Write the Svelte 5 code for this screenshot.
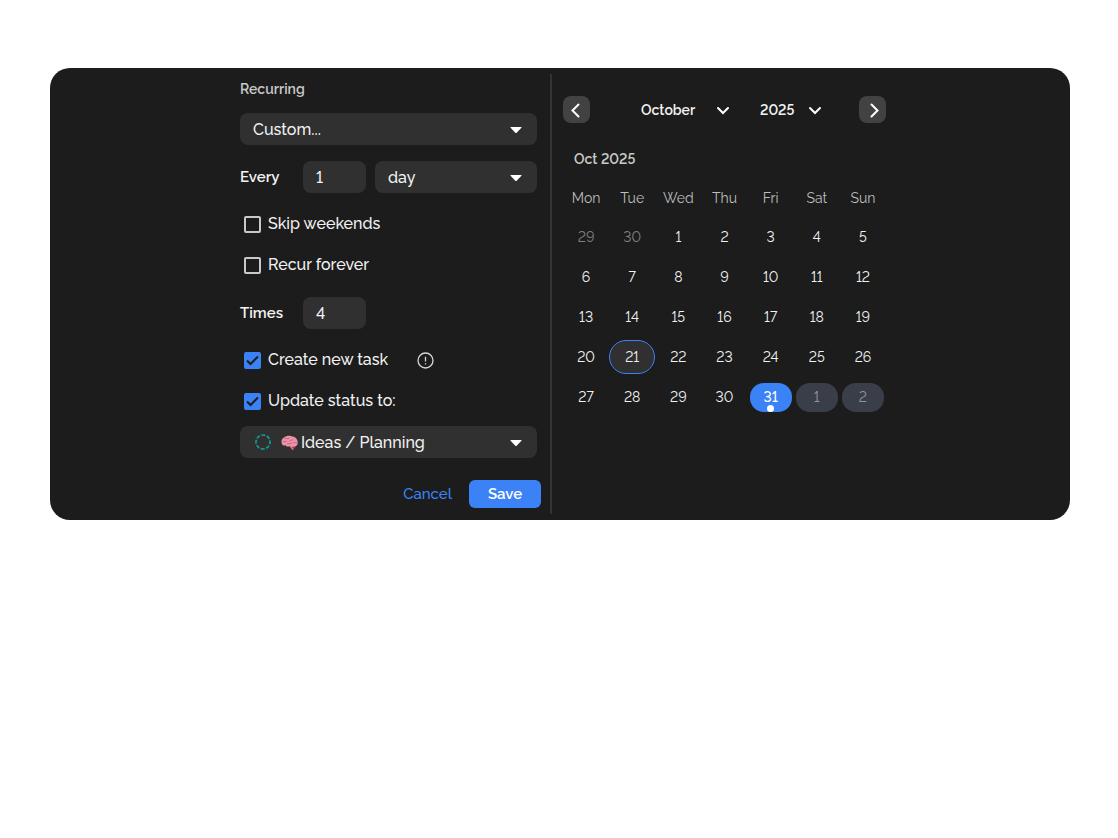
<script lang="ts">
    const months = [
        "January", "February", "March", "April", "May", "June",
        "July", "August", "September", "October", "November", "December",
    ];
    const years = [2024, 2025, 2026];
    const weekdays = ["Mon", "Tue", "Wed", "Thu", "Fri", "Sat", "Sun"];

    // Form data
    let recurring = $state("Custom...");
    let interval = $state(1);
    let unit = $state("day");
    let skipWeekends = $state(false);
    let recurForever = $state(false);
    let times = $state(4);
    let createTask = $state(true);
    let updateStatus = $state(true);
    let status = $state("Ideas / Planning");

    // Calendar data
    let month = $state("October");
    let year = $state(2025);

    // Five weeks starting on Monday, September 29
    const weeks = Array.from({ length: 5 }, (_, week) =>
        Array.from({ length: 7 }, (_, day) => {
            const offset = week * 7 + day - 1;
            if (offset < 1) return { day: offset + 30, kind: "outside" };
            if (offset > 31) return { day: offset - 31, kind: "upcoming" };
            if (offset === 31) return { day: offset, kind: "selected" };
            if (offset === 21) return { day: offset, kind: "today" };
            return { day: offset, kind: "" };
        })
    );
</script>

{#snippet caret()}
    <svg class="caret" width="12" height="6" viewBox="0 0 12 6" aria-hidden="true">
        <path d="M1 0H11Q12 0 11.400 .8L6.700 5.700Q6 6.300 5.300 5.700L.6 .8Q0 0 1 0Z" fill="#fff" />
    </svg>
{/snippet}

{#snippet chevron()}
    <svg class="chevron" width="14" height="9" viewBox="0 0 14 9" aria-hidden="true">
        <path d="M2 2L7 7L12 2" fill="none" stroke="#fff" stroke-width="2" stroke-linecap="round" />
    </svg>
{/snippet}

<main class="card">
    <div class="dialog">
        <form class="recurrence" onsubmit={(e) => e.preventDefault()}>
            <div class="fields">
                <label class="title" for="recurring">Recurring</label>
                <div class="select">
                    <select id="recurring" bind:value={recurring}>
                        <option>Daily</option>
                        <option>Weekly</option>
                        <option>Custom...</option>
                    </select>
                    {@render caret()}
                </div>

                <div class="row every">
                    <label class="name" for="interval">Every</label>
                    <input class="number" id="interval" type="number" min="1" bind:value={interval} />
                    <div class="select unit">
                        <select aria-label="Unit" bind:value={unit}>
                            <option>day</option>
                            <option>week</option>
                            <option>month</option>
                        </select>
                        {@render caret()}
                    </div>
                </div>

                <div class="checks">
                    <label class="check">
                        <input type="checkbox" bind:checked={skipWeekends} />
                        Skip weekends
                    </label>
                    <label class="check">
                        <input type="checkbox" bind:checked={recurForever} />
                        Recur forever
                    </label>
                </div>

                <div class="row">
                    <label class="name" for="times">Times</label>
                    <input class="number" id="times" type="number" min="1" bind:value={times} />
                </div>

                <div class="checks">
                    <div class="row with-info">
                        <label class="check">
                            <span class="box">
                                <input type="checkbox" bind:checked={createTask} />
                                <svg viewBox="0 0 17 17" aria-hidden="true"><path d="M3 8.500L6.500 12L14 4.500" /></svg>
                            </span>
                            Create new task
                        </label>
                        <svg class="info" width="17" height="17" viewBox="0 0 17 17" aria-hidden="true">
                            <circle cx="8.500" cy="8.500" r="7.500" fill="none" stroke="#d6d6d6" stroke-width="1.300" />
                            <path d="M8.500 4.800V9.400M8.500 11.300V12.500" stroke="#d6d6d6" stroke-width="1.300" />
                        </svg>
                    </div>
                    <label class="check">
                        <span class="box">
                            <input type="checkbox" bind:checked={updateStatus} />
                            <svg viewBox="0 0 17 17" aria-hidden="true"><path d="M3 8.500L6.500 12L14 4.500" /></svg>
                        </span>
                        Update status to:
                    </label>
                </div>

                <div class="select status">
                    <select aria-label="Status" bind:value={status}>
                        <option>Ideas / Planning</option>
                        <option>In progress</option>
                        <option>Done</option>
                    </select>
                    <span class="status-icons">
                        <svg width="16" height="16" viewBox="0 0 16 16" aria-hidden="true">
                            <circle cx="8" cy="8" r="7" fill="none" stroke="#129c96" stroke-width="1.700" pathLength="80" stroke-dasharray="7 3" stroke-dashoffset="3" />
                        </svg>
                        <svg width="17" height="15" viewBox="0 0 17 15" aria-hidden="true">
                            <path d="M9 10.500L14.500 10.500Q15.500 12 13 13.500Q11 14.500 10 13.500Z" fill="#a83a55" />
                            <path d="M1 9C-.3 6.500 .8 3.700 3 2.500C5 .6 9 .2 11.500 1.400C14.500 1.500 16.800 4.500 16.700 7.500C17 10 15 11.700 12.500 11.400C11 12.500 9.300 11.800 8.500 11C6.500 12.300 5 11 4.700 10.200C3 11 1.500 10.300 1 9Z" fill="#ea93a9" />
                            <path d="M2 6.800C3.500 5.500 4 7.500 5.500 6.500M4 3.500C5.500 2.500 6 4.500 8 3.200M8.500 6C10 4.500 11 6 12 4.500M6.500 9C8 7.500 9 9.500 11 8.200M12.500 7.500C14 6.500 14 8.500 15.500 8" fill="none" stroke="#c05a78" stroke-width=".9" stroke-linecap="round" />
                            <path d="M9 11.300C10 12 11 13.200 11.800 14.200" fill="none" stroke="#d8728b" stroke-width="1.400" stroke-linecap="round" />
                        </svg>
                    </span>
                    {@render caret()}
                </div>
            </div>

            <div class="actions">
                <button class="cancel" type="button">Cancel</button>
                <button class="save" type="submit">Save</button>
            </div>
        </form>

        <section class="calendar">
            <div class="nav">
                <button class="arrow" type="button" aria-label="Previous month">
                    <svg width="27" height="27" viewBox="0 0 27 27" aria-hidden="true">
                        <path d="M15.500 8.500L9.500 14.500L15.500 20.500" />
                    </svg>
                </button>
                <div class="pickers">
                    <div class="picker month">
                        <select aria-label="Month" bind:value={month}>
                            {#each months as name}
                                <option>{name}</option>
                            {/each}
                        </select>
                        {@render chevron()}
                    </div>
                    <div class="picker year">
                        <select aria-label="Year" bind:value={year}>
                            {#each years as value}
                                <option {value}>{value}</option>
                            {/each}
                        </select>
                        {@render chevron()}
                    </div>
                </div>
                <button class="arrow" type="button" aria-label="Next month">
                    <svg width="27" height="27" viewBox="0 0 27 27" aria-hidden="true">
                        <path d="M12.500 8.500L18.500 14.500L12.500 20.500" />
                    </svg>
                </button>
            </div>

            <h2>Oct 2025</h2>

            <table>
                <thead>
                    <tr>
                        {#each weekdays as weekday}
                            <th scope="col">{weekday}</th>
                        {/each}
                    </tr>
                </thead>
                <tbody>
                    {#each weeks as week}
                        <tr>
                            {#each week as date}
                                <td><button class="day {date.kind}" type="button">{date.day}</button></td>
                            {/each}
                        </tr>
                    {/each}
                </tbody>
            </table>
        </section>
    </div>
</main>

<style>
    :global(body) {
        margin: 0;
        background: #fff;
    }

    .card {
        margin: 68px 48px 68px 50px;
        padding: 6px 0;
        border-radius: 20px;
        background: #1c1c1c;
        color: #f2f2f2;
        font-family: Raleway, Lato, sans-serif;
        font-size: 16px;
        font-weight: 500;
        font-variant-numeric: lining-nums;
    }

    button,
    input,
    select {
        box-sizing: border-box;
        margin: 0;
        padding: 0;
        border: 0;
        color: inherit;
        font: inherit;
        font-variant-numeric: lining-nums;
    }

    button {
        background: none;
        cursor: pointer;
    }

    .dialog {
        display: grid;
        grid-template-columns: 324fr 340fr;
        max-width: 664px;
        margin: 0 auto;
    }

    .recurrence {
        padding: 5px 9px 6px 12px;
        border-right: 2px solid #333;
    }

    .fields {
        display: flex;
        flex-direction: column;
        margin-right: 4px;
    }

    .title {
        margin-bottom: 14px;
        color: #c9c9c9;
        font-size: 14px;
        font-weight: 600;
        line-height: 20px;
    }

    .select {
        position: relative;
    }

    .select select {
        display: block;
        width: 100%;
        height: 32px;
        padding: 0 32px 0 13px;
        border-radius: 8px;
        background: #303030;
        appearance: none;
    }

    .caret {
        position: absolute;
        top: 14px;
        right: 15px;
        pointer-events: none;
    }

    .row {
        display: flex;
        align-items: center;
    }

    .every {
        margin-top: 16px;
    }

    .name {
        width: 63px;
        font-size: 15px;
        font-weight: 600;
    }

    .number {
        width: 63px;
        height: 32px;
        padding: 0 13px;
        border-radius: 8px;
        background: #303030;
        appearance: textfield;
    }

    .unit {
        flex: 1;
        margin-left: 9px;
    }

    .checks {
        display: flex;
        flex-direction: column;
        gap: 17px;
        margin: 19px 0 20px;
    }

    .check {
        display: flex;
        align-items: center;
        gap: 7px;
        padding-left: 4px;
        line-height: 24px;
    }

    .check input {
        display: block;
        width: 17px;
        height: 17px;
        border: 2px solid #c9c9c9;
        border-radius: 2px;
        appearance: none;
    }

    .check input:checked {
        border-color: #3b82f6;
        background: #3b82f6;
    }

    .box {
        position: relative;
    }

    .box svg {
        position: absolute;
        inset: 0;
        fill: none;
        stroke: #1c1c1c;
        stroke-width: 2;
        pointer-events: none;
    }

    .with-info {
        gap: 29px;
    }

    .status {
        margin-top: -7px;
    }

    .status select {
        padding-left: 61px;
    }

    .status-icons {
        position: absolute;
        top: 8px;
        left: 15px;
        display: flex;
        align-items: center;
        gap: 10px;
        pointer-events: none;
    }

    .actions {
        display: flex;
        justify-content: flex-end;
        gap: 17px;
        margin-top: 22px;
        font-size: 15px;
    }

    .cancel {
        color: #3b82f6;
    }

    .save {
        width: 72px;
        height: 28px;
        border-radius: 6px;
        background: #3b82f6;
        color: #fff;
        font-weight: 600;
    }

    .calendar {
        padding: 22px 6px 0 11px;
        font-size: 14px;
    }

    .nav {
        display: flex;
        align-items: center;
        justify-content: space-between;
    }

    .arrow {
        width: 27px;
        height: 27px;
        border-radius: 8px;
        background: #424242;
    }

    .arrow svg {
        display: block;
        fill: none;
        stroke: #fff;
        stroke-width: 2;
        stroke-linecap: round;
    }

    .pickers {
        display: flex;
        gap: 30px;
        padding-left: 14px;
    }

    .picker {
        position: relative;
    }

    .picker select {
        display: block;
        width: 100%;
        height: 27px;
        background: transparent;
        font-weight: 600;
        appearance: none;
    }

    .select option,
    .picker option {
        background: #303030;
    }

    .month {
        width: 89px;
    }

    .year {
        width: 62px;
    }

    .chevron {
        position: absolute;
        top: 10px;
        right: 0;
        pointer-events: none;
    }

    h2 {
        margin: 26px 0 10px 11px;
        color: #c9c9c9;
        font-size: 14px;
        font-weight: 600;
        line-height: 20px;
    }

    table {
        width: 100%;
        border-collapse: collapse;
        table-layout: fixed;
        text-align: center;
    }

    th {
        height: 38px;
        padding: 0;
        color: #bdbdbd;
        font-weight: 400;
    }

    td {
        height: 40px;
        padding: 0;
    }

    .day {
        position: relative;
        display: block;
        width: 42px;
        height: 29px;
        margin: 0 auto;
        border-radius: 14px;
        font-weight: 400;
    }

    .outside {
        color: #808080;
    }

    .today {
        width: 100%;
        height: 34px;
        border: 1px solid #3b82f6;
        border-radius: 17px;
        background: #303030;
    }

    .selected {
        background: #3b82f6;
        color: #fff;
        font-weight: 500;
    }

    .selected::after {
        content: "";
        position: absolute;
        bottom: 0;
        left: calc(50% - 4px);
        width: 7px;
        height: 7px;
        border-radius: 50%;
        background: #fff;
    }

    .upcoming {
        background: #3a3e48;
        color: #929499;
    }
</style>
